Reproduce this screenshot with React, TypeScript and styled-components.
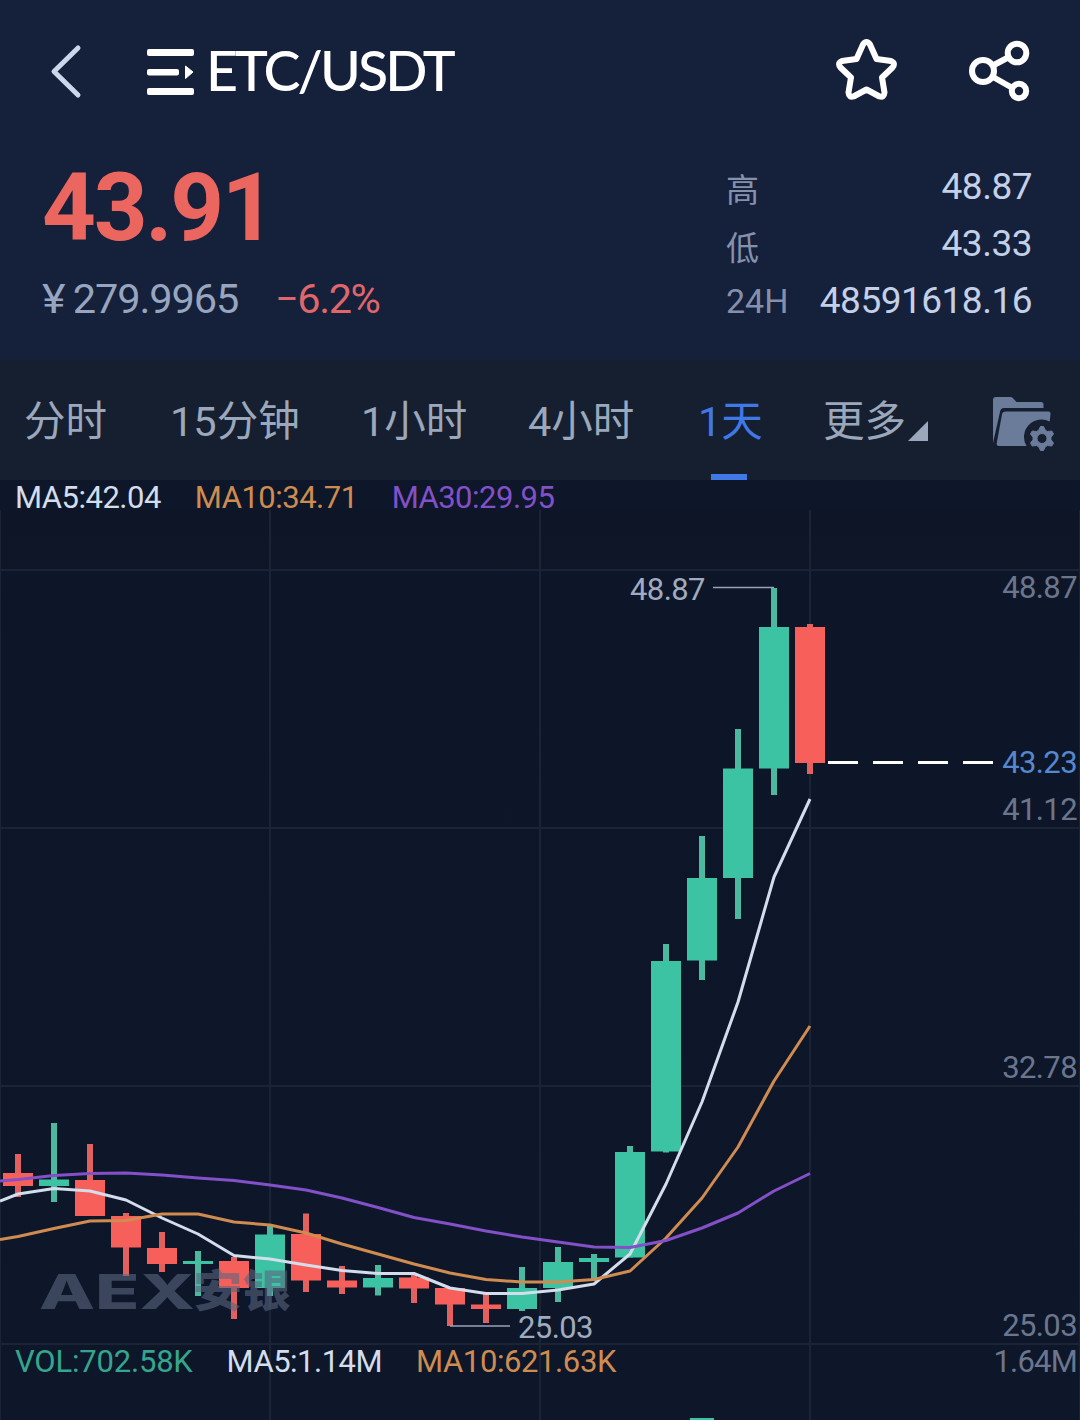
import React from 'react';
import styled, { createGlobalStyle } from 'styled-components';

const GlobalStyle = createGlobalStyle`
  * { box-sizing: border-box; }
  body { margin: 0; background: #0d1729; }
`;

const color = {
  up: '#3bc3a3',
  upWick: '#4db8a0',
  down: '#f7605a',
  downWick: '#e0615f',
  ma5: '#d3ddec',
  ma10: '#d08c50',
  ma30: '#8350c8',
  grid: '#1a2435',
  axis: '#6b768d',
};

const Screen = styled.div`
  width: 1080px;
  height: 1420px;
  overflow: hidden;
  display: flex;
  flex-direction: column;
  background: #0d1729;
  font-family: Roboto, 'Noto Sans CJK SC', sans-serif;
`;

const Header = styled.header`
  height: 360px;
  background: #15203a;
`;

const TopBar = styled.div`
  height: 143px;
  display: flex;
  align-items: center;
  padding: 0 46px 0 47px;
`;

const Title = styled.h1`
  margin: 0 auto 0 11px;
  padding-bottom: 4px;
  font: 500 55.5px/80px Lato, sans-serif;
  letter-spacing: -2.9px;
  color: #fff;
`;

const MenuIcon = styled.svg`
  margin-left: 62px;
`;

const ShareIcon = styled.svg`
  margin-left: 68px;
`;

const Summary = styled.div`
  display: flex;
  justify-content: space-between;
  padding: 0 48px 0 42px;
`;

const PriceColumn = styled.div`
  display: flex;
  flex-direction: column;
`;

const Price = styled.div`
  margin-top: 15px;
  font-size: 94px;
  line-height: 100px;
  font-weight: 700;
  letter-spacing: -2.3px;
  color: #ec6660;
`;

const SubPrice = styled.div`
  display: flex;
  gap: 37px;
  margin-top: 16px;
  font-size: 41.5px;
  line-height: 50px;
  letter-spacing: -1.1px;
  color: #98a5bf;
`;

const Yen = styled.span`
  display: inline-block;
  margin: 0 10px 0 0;
  transform: scaleX(1.08);
  transform-origin: 0 50%;
`;

const Change = styled.span`
  color: #df666b;
  letter-spacing: -1.5px;
`;

const Stats = styled.div`
  width: 306px;
  display: grid;
  grid-template-rows: 57px 57px 57px;
  margin-top: 15px;
`;

const Stat = styled.div`
  display: flex;
  justify-content: space-between;
  align-items: baseline;
  line-height: 57px;
`;

const StatLabel = styled.span<{ $size?: number; $drop?: number }>`
  font-size: ${(p) => p.$size ?? 34}px;
  color: #8591ac;
  position: relative;
  top: ${(p) => p.$drop ?? 0}px;
`;

const StatValue = styled.span`
  font-size: 37px;
  letter-spacing: -0.5px;
  color: #c4d0e8;
`;

const Tabs = styled.nav`
  height: 120px;
  display: grid;
  grid-template-columns: 146px 191px 167px 170px 125px 170px 1fr;
  padding-left: 24px;
  background: #151f2f;
`;

const Tab = styled.div<{ $active?: boolean }>`
  position: relative;
  display: flex;
  align-items: center;
  font-size: 41.5px;
  line-height: 60px;
  padding-top: 4px;
  white-space: nowrap;
  color: ${(p) => (p.$active ? '#4078e6' : '#9ba7ba')};
`;

const Underline = styled.i`
  position: absolute;
  left: 13px;
  bottom: 0;
  width: 36px;
  height: 6px;
  background: #4078e6;
`;

const Corner = styled.svg`
  margin: 18px 0 0 2px;
`;

const Folder = styled.svg`
  margin-top: 3px;
`;

const Legend = styled.div<{ $height: number; $gap: number }>`
  position: relative;
  height: ${(p) => p.$height}px;
  display: flex;
  gap: ${(p) => p.$gap}px;
  padding-left: 15px;
  font-size: 31px;
  line-height: 36px;
  white-space: nowrap;
`;

const LegendItem = styled.span<{ $color: string; $tracking?: number }>`
  color: ${(p) => p.$color};
  letter-spacing: ${(p) => p.$tracking ?? -0.5}px;
`;

const VolumeScale = styled.span`
  margin-left: auto;
  padding-right: 3px;
  letter-spacing: -0.8px;
  color: ${color.axis};
`;

const PricePane = styled.svg`
  display: block;
  flex: none;
  overflow: visible;
`;

const VolumePane = styled.section`
  position: relative;
  height: 76px;
`;

const VolumeGrid = styled.svg`
  position: absolute;
  inset: 0;
`;

type Candle = [high: number, top: number, bottom: number, low: number, up: 0 | 1];

const candles: Candle[] = [
  [1154, 1173, 1186, 1197, 0],
  [1123, 1179.5, 1186, 1202, 1],
  [1144, 1180, 1216, 1216, 0],
  [1213, 1216, 1247.5, 1276, 0],
  [1232, 1248, 1264, 1272, 0],
  [1251, 1261, 1264, 1296, 1],
  [1257, 1261, 1288, 1319, 0],
  [1226, 1234.5, 1288, 1296, 1],
  [1213.5, 1234, 1280.5, 1292, 0],
  [1266, 1280.5, 1287.5, 1294, 0],
  [1265, 1278, 1287.5, 1295.5, 1],
  [1275, 1277.5, 1288.5, 1303, 0],
  [1288, 1288, 1304.5, 1326, 0],
  [1293, 1304.5, 1309, 1323, 0],
  [1267, 1288, 1309, 1311, 1],
  [1247, 1262, 1288, 1302, 1],
  [1254, 1258, 1262, 1281, 1],
  [1146, 1152, 1257.5, 1257.5, 1],
  [944, 961, 1151.5, 1152.5, 1],
  [836, 878, 960.5, 980, 1],
  [729, 768.5, 878, 919, 1],
  [588, 627, 768.5, 795, 1],
  [624, 627, 763, 774, 0],
];

const ma5 = [1201, 1194, 1188.5, 1191, 1200, 1218, 1234, 1255.5, 1259, 1265, 1270.5, 1273.5, 1273.5, 1288, 1293.5, 1293.5, 1290, 1284, 1254, 1184, 1102, 1002, 877, 799];
const ma10 = [1239.5, 1236.5, 1228.5, 1221, 1220.5, 1214, 1214, 1222, 1225, 1233, 1244, 1254, 1264, 1273, 1279.5, 1282, 1282, 1279.5, 1271, 1238, 1198, 1147, 1081, 1026];
const ma30 = [1181, 1179.5, 1175.5, 1173.5, 1173, 1175, 1178, 1180.5, 1185, 1190, 1198, 1207.5, 1217.5, 1224, 1231, 1237, 1242, 1247, 1247.5, 1240.5, 1228, 1213, 1191, 1173.5];

const linePoints = (ys: number[]) =>
  ys.map((y, i) => `${i === 0 ? 0 : 18 + 36 * (i - 1)},${y}`).join(' ');

const columns = [0, 270, 540, 810, 1080];

function PriceChart() {
  return (
    <PricePane width="1080" height="834" viewBox="0 510 1080 834" fontSize="31">
      <defs>
        <linearGradient id="pane" x1="0" y1="0" x2="0" y2="1">
          <stop offset="0" stopColor="#0e1527" />
          <stop offset=".1" stopColor="#0d1628" />
          <stop offset="1" stopColor="#0d1729" />
        </linearGradient>
      </defs>
      <rect y="510" width="1080" height="834" fill="url(#pane)" />
      <g stroke={color.grid} strokeWidth="2">
        {columns.map((x) => <line key={x} x1={x} x2={x} y1="510" y2="1344" />)}
        {[570, 828, 1086, 1344].map((y) => <line key={y} x1="0" x2="1080" y1={y} y2={y} />)}
      </g>
      {candles.map(([high, top, bottom, low, up], i) => (
        <g key={i}>
          <rect x={15 + 36 * i} y={high} width="6" height={low - high} fill={up ? color.upWick : color.downWick} />
          <rect x={3 + 36 * i} y={top} width="30" height={bottom - top} fill={up ? color.up : color.down} />
        </g>
      ))}
      <g fill="#5a6680" fillOpacity=".6" fontWeight="800">
        <text x="39" y="1309" fontFamily="Inter" fontSize="48" textLength="156" lengthAdjust="spacingAndGlyphs">AEX</text>
        <text x="193" y="1307" fontFamily="Noto Sans CJK SC" fontWeight="900" fontSize="44" textLength="98" lengthAdjust="spacingAndGlyphs">安银</text>
      </g>
      <g fill="none" strokeWidth="3" strokeLinejoin="round">
        <polyline points={linePoints(ma5)} stroke={color.ma5} />
        <polyline points={linePoints(ma10)} stroke={color.ma10} />
        <polyline points={linePoints(ma30)} stroke={color.ma30} />
      </g>
      <line x1="828" x2="993" y1="762.5" y2="762.5" stroke="#fff" strokeWidth="3" strokeDasharray="30 15" />
      <path d="M713 587.500H774M450 1326H510" stroke="#98a3b6" strokeWidth="1.500" />
      <g fill="#a0abbf" letterSpacing="-.6">
        <text x="630" y="600">48.87</text>
        <text x="518" y="1338">25.03</text>
      </g>
      <g fill={color.axis} textAnchor="end" letterSpacing="-.6">
        <text x="1077" y="598">48.87</text>
        <text x="1077" y="773" fill="#5588cc">43.23</text>
        <text x="1077" y="820">41.12</text>
        <text x="1077" y="1078">32.78</text>
        <text x="1077" y="1336">25.03</text>
      </g>
    </PricePane>
  );
}

function FolderGear() {
  return (
    <Folder width="62" height="56" viewBox="0 0 62 56" fill="#6b7c9b">
      <path d="M0 47V4Q0 1 3 1H17.500Q19 1 20 2.300L23.500 6H48Q50.500 6 50.500 8.500V12H11Q8 12 7.200 15Z" />
      <path d="M12.500 15.500H55.500Q57.800 15.500 57.500 18L56.700 25.500A17.500 17.500 0 0 0 33.500 50H6Q3.300 50 3.700 47.500L9 18.200Q9.600 15.500 12.500 15.500Z" />
      <path fillRule="evenodd" stroke="#6b7c9b" strokeLinejoin="round" d="M47.500 30.500H50.500L52.300 34.200L54.500 35.500L58.800 35L60.500 38L58 41.200V43.800L60.500 47L58.800 50L54.500 49.500L52.300 50.800L50.500 54.500H47.500L45.700 50.800L43.500 49.500L39.200 50L37.500 47L40 43.800V41.200L37.500 38L39.200 35L43.500 35.500L45.700 34.200ZM49 37.500A5 5 0 1 0 49 47.500A5 5 0 1 0 49 37.500Z" />
    </Folder>
  );
}

const stats = [
  { label: '高', value: '48.87', size: 33, drop: 3 },
  { label: '低', value: '43.33', size: 33, drop: 4 },
  { label: '24H', value: '48591618.16', size: 34, drop: 0 },
];

export default function App() {
  return (
    <Screen>
      <GlobalStyle />
      <Header>
        <TopBar>
          <svg width="38" height="60" viewBox="0 0 38 60">
            <path d="M31 6L7 29.500L31 53" fill="none" stroke="#cbd7ea" strokeWidth="5" strokeLinecap="round" strokeLinejoin="round" />
          </svg>
          <MenuIcon width="48" height="48" viewBox="0 0 48 48" fill="#fff">
            <rect y="1" width="47" height="7" rx="2" />
            <rect y="21" width="32" height="6.500" rx="2" />
            <rect y="40" width="47" height="7" rx="2" />
            <path d="M38.500 18L46 24L38.500 30.500Z" stroke="#fff" strokeLinejoin="round" />
          </MenuIcon>
          <Title>ETC/USDT</Title>
          <svg width="64" height="66" viewBox="836 38 64 66">
            <path d="M863 43.500Q866.500 38.500 870 43.500L876.500 58L891 60Q896 62 892.500 66.500L882 76.500L884.500 91.500Q884 97 879.500 95.500L866.500 88.500L853.500 95.500Q849 97 848.500 91.500L851 76.500L840.500 66.500Q837 62 842 60L856.500 58Z" fill="none" stroke="#fff" strokeWidth="6" strokeLinejoin="round" />
          </svg>
          <ShareIcon width="66" height="66" viewBox="968 39 66 66" fill="none" stroke="#fff" strokeWidth="6">
            <circle cx="983" cy="71" r="11" />
            <circle cx="1017" cy="53" r="9.300" />
            <circle cx="1019" cy="91" r="7.200" />
            <path d="M993 65.500L1009 57M993 77L1012.500 88" />
          </ShareIcon>
        </TopBar>
        <Summary>
          <PriceColumn>
            <Price>43.91</Price>
            <SubPrice>
              <span><Yen>¥</Yen>279.9965</span>
              <Change>−6.2%</Change>
            </SubPrice>
          </PriceColumn>
          <Stats>
            {stats.map((s) => (
              <Stat key={s.label}>
                <StatLabel $size={s.size} $drop={s.drop}>{s.label}</StatLabel>
                <StatValue>{s.value}</StatValue>
              </Stat>
            ))}
          </Stats>
        </Summary>
      </Header>
      <Tabs>
        <Tab>分时</Tab>
        <Tab>15分钟</Tab>
        <Tab>1小时</Tab>
        <Tab>4小时</Tab>
        <Tab $active>1天<Underline /></Tab>
        <Tab>
          更多
          <Corner width="20" height="20" viewBox="0 0 20 20"><path d="M20 0V20H0Z" fill="#9ba7ba" /></Corner>
        </Tab>
        <Tab><FolderGear /></Tab>
      </Tabs>
      <Legend $height={30} $gap={34}>
        <LegendItem $color={color.ma5}>MA5:42.04</LegendItem>
        <LegendItem $color={color.ma10}>MA10:34.71</LegendItem>
        <LegendItem $color={color.ma30}>MA30:29.95</LegendItem>
      </Legend>
      <PriceChart />
      <VolumePane>
        <VolumeGrid width="1080" height="76">
          <g stroke={color.grid} strokeWidth="2">
            {columns.map((x) => <line key={x} x1={x} x2={x} y1="0" y2="76" />)}
          </g>
          <rect x="690" y="74" width="24" height="2" fill={color.up} />
        </VolumeGrid>
        <Legend $height={36} $gap={34}>
          <LegendItem $color="#35a68d" $tracking={-0.2}>VOL:702.58K</LegendItem>
          <LegendItem $color={color.ma5}>MA5:1.14M</LegendItem>
          <LegendItem $color={color.ma10} $tracking={-0.4}>MA10:621.63K</LegendItem>
          <VolumeScale>1.64M</VolumeScale>
        </Legend>
      </VolumePane>
    </Screen>
  );
}
